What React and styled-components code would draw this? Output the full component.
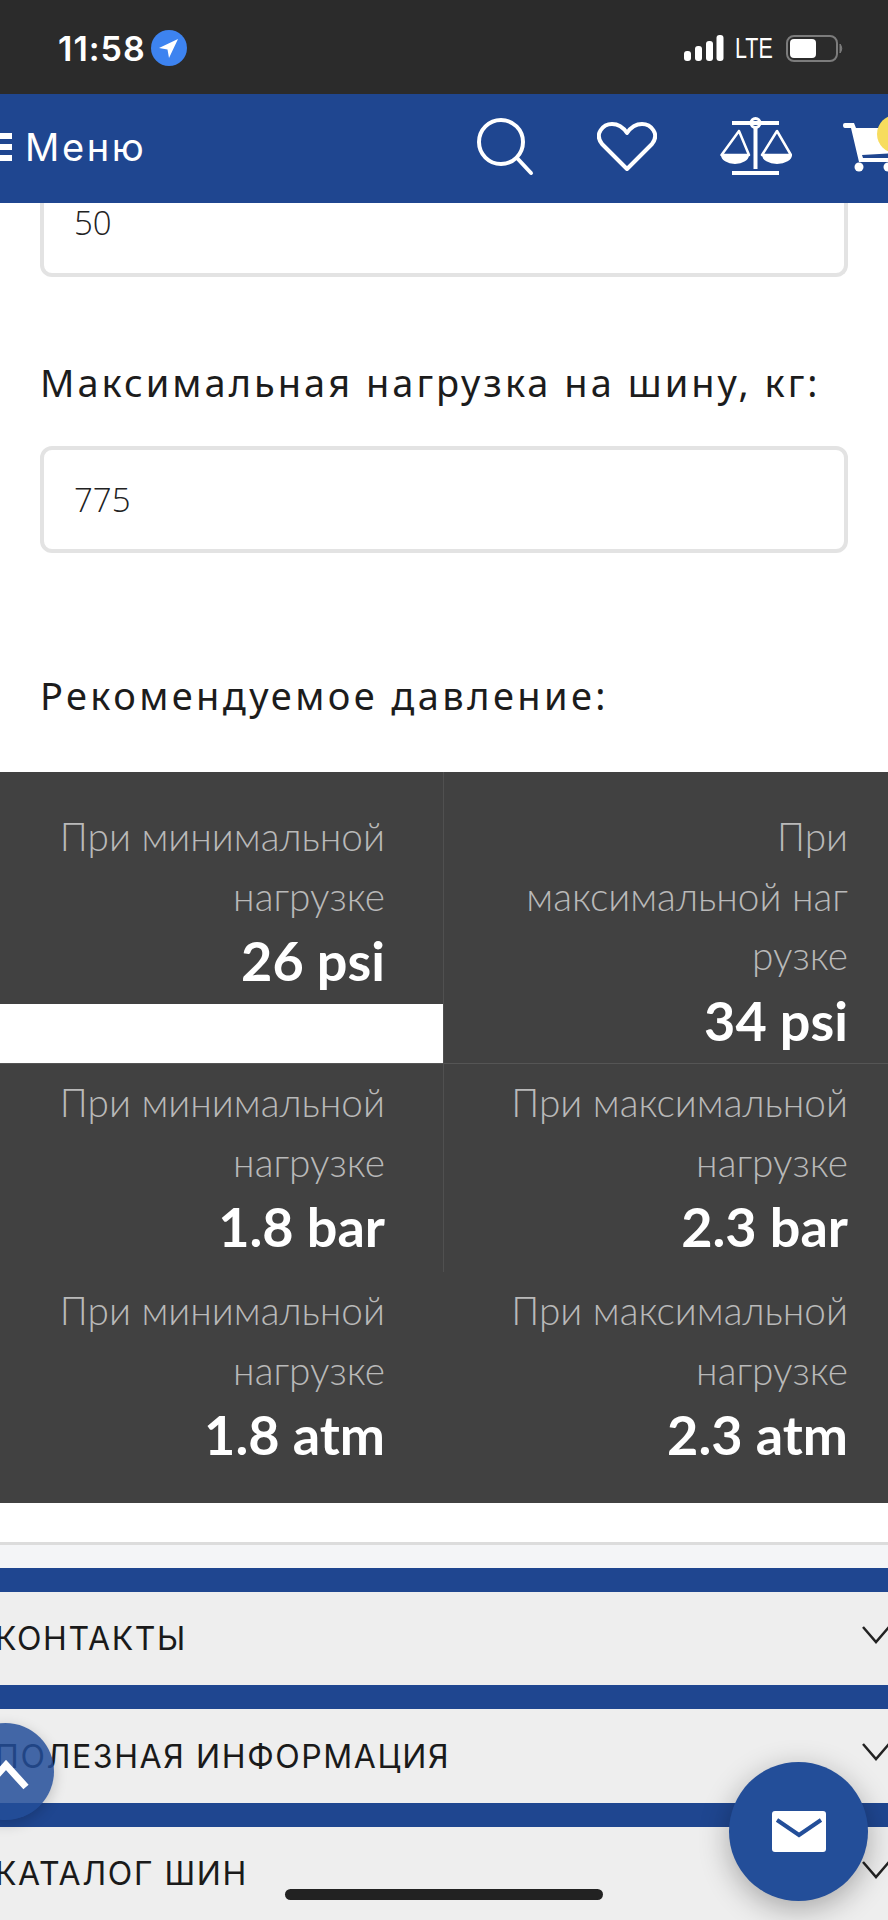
import styled, { createGlobalStyle } from 'styled-components';

const GlobalStyle = createGlobalStyle`
  html, body { margin: 0; padding: 0; background: #fff; }
  * { box-sizing: border-box; }
`;

const Page = styled.div`
  position: relative;
  width: 888px;
  height: 1920px;
  overflow: hidden;
  background: #fff;
  font-family: "Open Sans", "Liberation Sans", sans-serif;
`;

const StatusBar = styled.div`
  height: 94px;
  background: #2b2b2b;
  color: #fff;
  display: flex;
  align-items: center;
  padding: 2px 45px 0 58px;
`;

const Clock = styled.span`
  font-family: Inter, sans-serif;
  font-size: 34px;
  font-weight: 600;
  letter-spacing: 1px;
  width: 93px;
`;

const StatusRight = styled.div`
  margin-left: auto;
  display: flex;
  align-items: center;
  gap: 11px;
`;

const Lte = styled.span`
  font-family: "Liberation Sans", sans-serif;
  font-size: 29px;
  line-height: 1;
  transform: scaleX(0.74);
  transform-origin: left center;
  width: 40px;
`;

const Nav = styled.div`
  height: 109px;
  background: #1f4690;
  color: #fff;
  display: flex;
  align-items: center;
  padding-bottom: 4px;
  overflow: hidden;
`;

const MenuButton = styled.div`
  display: flex;
  align-items: center;
  gap: 13px;
  width: 477px;
  flex: none;
`;

const Burger = styled.div`
  width: 12px;
  height: 28px;
  flex: none;
  background: repeating-linear-gradient(#fff 0 6px, transparent 6px 11px);
`;

const MenuText = styled.span`
  font-family: Inter, sans-serif;
  font-size: 38px;
  letter-spacing: 2.6px;
  line-height: 1;
`;

const NavIcons = styled.div`
  display: flex;
  align-items: center;
  gap: 63px;
  flex: none;
`;

const CartWrap = styled.div`
  position: relative;
  flex: none;
  margin-left: -12px;
  width: 70px;
  height: 60px;
  display: flex;
  align-items: center;
`;

const Badge = styled.span`
  position: absolute;
  left: 34px;
  top: -2px;
  width: 38px;
  height: 38px;
  border-radius: 50%;
  background: #f7dc5e;
`;

const Content = styled.div`
  height: 569px;
  display: flex;
  flex-direction: column;
  padding: 0 40px;
`;

const Input = styled.div`
  flex: none;
  height: ${p => p.$height}px;
  border: 4px solid #e3e3e3;
  border-top: ${p => (p.$cut ? 'none' : '4px solid #e3e3e3')};
  border-radius: ${p => (p.$cut ? '0 0 12px 12px' : '12px')};
  display: flex;
  align-items: ${p => (p.$cut ? 'flex-start' : 'center')};
  padding-left: 30px;
  font-size: 33px;
  font-weight: 300;
  color: #222;
  line-height: 40px;
`;

const Label = styled.div`
  font-family: "Noto Sans", sans-serif;
  font-size: 38px;
  line-height: 48px;
  letter-spacing: ${p => p.$spacing}px;
  color: #1c1c1c;
  margin-top: ${p => p.$top}px;
  margin-bottom: ${p => p.$bottom}px;
  white-space: nowrap;
`;

const Table = styled.div`
  display: grid;
  grid-template-columns: 443px 445px;
  align-items: start;
  font-family: Lato, "Open Sans", sans-serif;
`;

const Cell = styled.div`
  background: #414141;
  height: ${p => p.$height}px;
  padding: ${p => p.$top}px ${p => (p.$divider || p.$right ? 40 : 58)}px 0 20px;
  text-align: right;
  border-left: ${p => (p.$divider ? '1px solid #505050' : 'none')};
  border-top: ${p => (p.$line ? '1px solid #555' : 'none')};
`;

const CellLabel = styled.div`
  font-size: 38.8px;
  line-height: 59.5px;
  font-weight: 300;
  color: #b9b9b9;
  white-space: nowrap;
`;

const CellValue = styled.div`
  font-size: 54px;
  line-height: 60px;
  margin-top: 5px;
  font-weight: 700;
  color: #fff;
`;

const Footer = styled.div`
  margin-top: 39px;
  height: 26px;
  background: #f4f5f7;
  border-top: 3px solid #dcdcdc;
`;

const Accordion = styled.div`
  border-top: 24px solid #1f4690;
  height: ${p => p.$height}px;
  background: #eeeeee;
  display: flex;
  align-items: center;
  justify-content: space-between;
  font-family: Inter, sans-serif;
  font-size: 32px;
  letter-spacing: 1.6px;
  color: #1a1a1a;
`;

const AccordionTitle = styled.span`
  margin-left: -5px;
  white-space: nowrap;
`;

const Chevron = styled.svg`
  flex: none;
  margin-right: -2px;
  margin-bottom: 8px;
`;

const ScrollUp = styled.div`
  position: absolute;
  left: -43px;
  top: 1723px;
  width: 97px;
  height: 97px;
  border-radius: 50%;
  background: rgba(35, 78, 153, 0.85);
  box-shadow: 0 4px 14px rgba(0, 0, 0, 0.2);
  display: flex;
  align-items: center;
  justify-content: center;
`;

const ScrollArrow = styled.svg`
  margin-top: 6px;
`;

const MailFab = styled.div`
  position: absolute;
  left: 729px;
  top: 1762px;
  width: 139px;
  height: 139px;
  border-radius: 50%;
  background: #234e99;
  box-shadow: 0 8px 30px rgba(0, 0, 0, 0.3);
  display: flex;
  align-items: center;
  justify-content: center;
`;

const HomeBar = styled.div`
  position: absolute;
  left: 285px;
  top: 1889px;
  width: 318px;
  height: 11px;
  border-radius: 6px;
  background: #222;
`;

const Arrow = () => (
  <svg width="36" height="36" viewBox="0 0 36 36">
    <circle cx="18" cy="18" r="18" fill="#3d83f0" />
    <path d="M27 9 L8 18 L16.5 19.5 L18 28 Z" fill="#fff" />
  </svg>
);

const Signal = () => (
  <svg width="40" height="26" viewBox="0 0 40 26" fill="#fff">
    <rect x="0" y="16" width="7" height="10" rx="3" />
    <rect x="11" y="11" width="7" height="15" rx="3" />
    <rect x="22" y="6" width="7" height="20" rx="3" />
    <rect x="32.5" y="0" width="7" height="26" rx="3" />
  </svg>
);

const Battery = () => (
  <svg width="57" height="27" viewBox="0 0 57 27">
    <rect x="1" y="1" width="50" height="25" rx="7" fill="none" stroke="#7c7c7c" strokeWidth="2" />
    <rect x="4" y="4" width="26" height="19" rx="4" fill="#fff" />
    <path d="M54 9 q3.5 4.5 0 9 z" fill="#7c7c7c" stroke="#7c7c7c" />
  </svg>
);

const SearchIcon = () => (
  <svg width="57" height="58" viewBox="0 0 57 58" fill="none" stroke="#fff" strokeWidth="4" strokeLinecap="round">
    <circle cx="24" cy="24" r="22" />
    <path d="M40 40 L54 55" />
  </svg>
);

const HeartIcon = () => (
  <svg width="60" height="50" viewBox="0 0 60 50" fill="none" stroke="#fff" strokeWidth="4" strokeLinejoin="round">
    <path d="M30 47 L5 22 C-3 12 6 2 15 2 C21 2 26 5 30 11 C34 5 39 2 45 2 C54 2 63 12 55 22 Z" />
  </svg>
);

const ScalesIcon = () => (
  <svg width="72" height="59" viewBox="0 0 72 59" fill="none" stroke="#fff" strokeWidth="4">
    <path d="M12 6 H59 M35.5 11 V52 M12 56 H59" />
    <circle cx="35.5" cy="6" r="4.5" strokeWidth="3" />
    <path d="M19 14 L1.5 38 H29 Z M57 14 L42 38 H71 Z" strokeWidth="2.5" strokeLinejoin="round" />
    <path d="M1 38 H29 A14 9 0 0 1 1 38 Z M42 38 H72 A15 9 0 0 1 42 38 Z" fill="#fff" stroke="none" />
  </svg>
);

const CartIcon = () => (
  <svg width="70" height="50" viewBox="0 0 70 50" fill="#fff">
    <path d="M0 3 Q0 1 2 1 H11 L13 6 H70 V30 L19 33 L20 36 H70 V40 H16 L8 6 H2 Q0 6 0 3 Z" />
    <circle cx="16" cy="45" r="4.5" />
    <circle cx="45" cy="45" r="4.5" />
  </svg>
);

const MailIcon = () => (
  <svg width="54" height="41" viewBox="0 0 54 41">
    <rect width="54" height="41" rx="3" fill="#fff" />
    <path d="M5 9 L27 24 L49 9" fill="none" stroke="#234e99" strokeWidth="4" />
  </svg>
);

const cells = [
  { lines: ['При минимальной', 'нагрузке'], value: '26 psi', height: 232, top: 35 },
  { lines: ['При', 'максимальной наг', 'рузке'], value: '34 psi', height: 291, top: 35, divider: true },
  { lines: ['При минимальной', 'нагрузке'], value: '1.8 bar', height: 209, top: 9, line: true },
  { lines: ['При максимальной', 'нагрузке'], value: '2.3 bar', height: 209, top: 9, divider: true, line: true },
  { lines: ['При минимальной', 'нагрузке'], value: '1.8 atm', height: 231, top: 9 },
  { lines: ['При максимальной', 'нагрузке'], value: '2.3 atm', height: 231, top: 9, right: true },
];

const sections = [
  { title: 'КОНТАКТЫ', height: 117 },
  { title: 'ПОЛЕЗНАЯ ИНФОРМАЦИЯ', height: 118 },
  { title: 'КАТАЛОГ ШИН', height: 117 },
];

export default function App() {
  return (
    <Page>
      <GlobalStyle />
      <StatusBar>
        <Clock>11:58</Clock>
        <Arrow />
        <StatusRight>
          <Signal />
          <Lte>LTE</Lte>
          <Battery />
        </StatusRight>
      </StatusBar>
      <Nav>
        <MenuButton>
          <Burger />
          <MenuText>Меню</MenuText>
        </MenuButton>
        <NavIcons>
          <SearchIcon />
          <HeartIcon />
          <ScalesIcon />
          <CartWrap>
            <CartIcon />
            <Badge />
          </CartWrap>
        </NavIcons>
      </Nav>
      <Content>
        <Input $cut $height={74}>50</Input>
        <Label $top={81} $bottom={40} $spacing={3}>Максимальная нагрузка на шину, кг:</Label>
        <Input $height={107}>775</Input>
        <Label $top={118} $bottom={52} $spacing={3.4}>Рекомендуемое давление:</Label>
      </Content>
      <Table>
        {cells.map((cell, i) => (
          <Cell key={i} $height={cell.height} $top={cell.top} $divider={cell.divider} $right={cell.right} $line={cell.line}>
            {cell.lines.map(line => <CellLabel key={line}>{line}</CellLabel>)}
            <CellValue>{cell.value}</CellValue>
          </Cell>
        ))}
      </Table>
      <Footer />
      {sections.map(section => (
        <Accordion key={section.title} $height={section.height}>
          <AccordionTitle>{section.title}</AccordionTitle>
          <Chevron width="28" height="18" viewBox="0 0 28 18" fill="none" stroke="#222" strokeWidth="2.5">
            <path d="M1 1 L14 16 L27 1" />
          </Chevron>
        </Accordion>
      ))}
      <ScrollUp>
        <ScrollArrow width="46" height="30" viewBox="0 0 46 30" fill="none" stroke="#fff" strokeWidth="7">
          <path d="M3 27 L23 5 L43 27" />
        </ScrollArrow>
      </ScrollUp>
      <MailFab><MailIcon /></MailFab>
      <HomeBar />
    </Page>
  );
}
